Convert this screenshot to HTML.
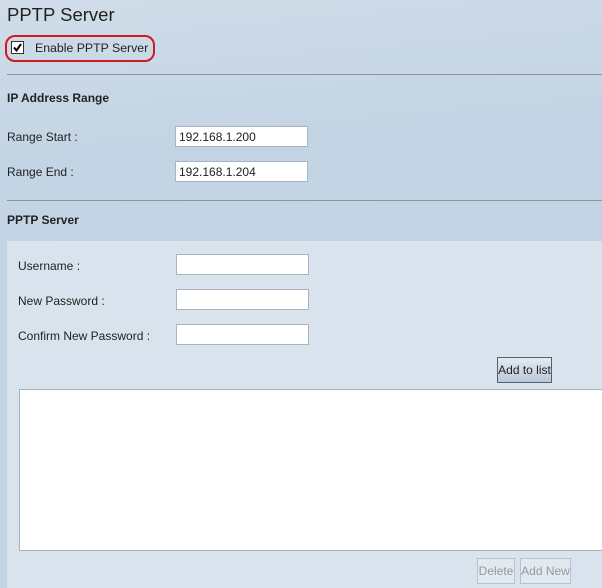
<!DOCTYPE html>
<html><head><style>
body{margin:0;width:602px;height:588px;overflow:hidden;position:relative;font-family:"Liberation Sans",Arial,sans-serif;font-size:12px;color:#222;background:linear-gradient(175deg,#d0dde9 0%,#c3d4e4 25%,#c2d3e3 60%,#c4d5e5 100%);}
.a{position:absolute;}
.in{position:absolute;background:#fff;border:1px solid #a9b4bf;height:21px;width:133px;box-sizing:border-box;font-size:12px;padding:3px 0 0 3px;}
.hr{position:absolute;left:7px;right:0;height:1px;background:#8a96a2;}
h1{position:absolute;margin:0;left:7px;top:4px;font-size:18.5px;font-weight:normal;color:#222;}
.b{font-weight:bold;}
.btn{position:absolute;border:1px solid #55606b;background:linear-gradient(#e4ebf2,#b9c8d7);font-size:12px;text-align:center;box-sizing:border-box;}
.dbtn{position:absolute;border:1px solid #b9c2cb;background:#e2e9f0;color:#999;font-size:12px;text-align:center;box-sizing:border-box;}
</style></head><body>
<h1>PPTP Server</h1>
<div class="a" style="left:5px;top:35px;width:150px;height:27px;border:2px solid #d2191f;border-radius:10px;box-sizing:border-box;"></div>
<div class="a" style="left:11px;top:41px;width:13px;height:13px;background:#fff;border:1px solid #333;box-sizing:border-box;"><svg width="11" height="11" style="position:absolute;left:0;top:0"><path d="M2 5.5 L4.5 8.5 L9 2" stroke="#000" stroke-width="2" fill="none"/></svg></div>
<div class="a" style="left:35px;top:41px;font-size:12.3px;">Enable PPTP Server</div>
<div class="hr" style="top:74px"></div>
<div class="a b" style="left:7px;top:91px">IP Address Range</div>
<div class="a" style="left:7px;top:130px">Range Start :</div>
<div class="in" style="left:175px;top:126px">192.168.1.200</div>
<div class="a" style="left:7px;top:165px">Range End :</div>
<div class="in" style="left:175px;top:161px">192.168.1.204</div>
<div class="hr" style="top:200px"></div>
<div class="a b" style="left:7px;top:213px">PPTP Server</div>
<div class="a" style="left:7px;top:241px;right:0;bottom:0;background:#d8e3ed"></div>
<div class="a" style="left:18px;top:259px">Username :</div>
<div class="in" style="left:176px;top:254px"></div>
<div class="a" style="left:18px;top:294px">New Password :</div>
<div class="in" style="left:176px;top:289px"></div>
<div class="a" style="left:18px;top:329px">Confirm New Password :</div>
<div class="in" style="left:176px;top:324px"></div>
<div class="btn" style="left:497px;top:357px;width:55px;height:26px;line-height:24px">Add to list</div>
<div class="a" style="left:19px;top:389px;right:0;height:162px;background:#fff;border:1px solid #a9b1b9;border-right:none;box-sizing:border-box"></div>
<div class="dbtn" style="left:477px;top:558px;width:38px;height:26px;line-height:24px">Delete</div>
<div class="dbtn" style="left:520px;top:558px;width:51px;height:26px;line-height:24px">Add New</div>
</body></html>
